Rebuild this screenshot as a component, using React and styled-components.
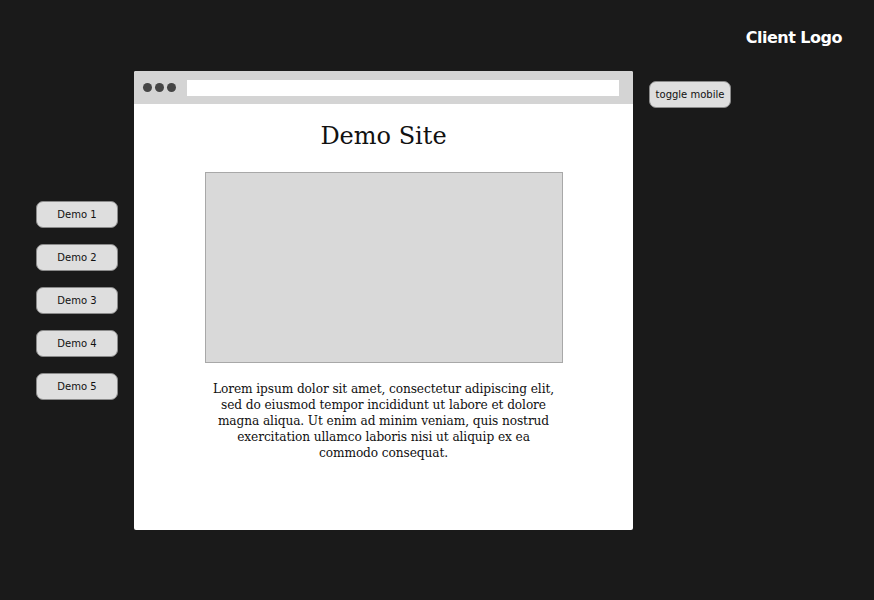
import React from "react";
import styled, { createGlobalStyle } from "styled-components";

const GlobalStyle = createGlobalStyle`
  body {
    margin: 0;
    background: #1a1a1a;
  }
`;

const Page = styled.div`
  width: 874px;
  height: 600px;
  background: #1a1a1a;
  font-family: "DejaVu Sans", "Liberation Sans", sans-serif;
  overflow: hidden;
`;

const Header = styled.div`
  height: 71px;
  display: flex;
  justify-content: flex-end;
  align-items: flex-start;
  padding: 0 32px 0 0;
  box-sizing: border-box;
`;

const Logo = styled.div`
  margin-top: 28px;
  color: #fff;
  font-weight: bold;
  font-size: 16px;
  letter-spacing: -0.5px;
`;

const Main = styled.div`
  display: flex;
  align-items: flex-start;
`;

const Sidebar = styled.div`
  width: 134px;
  box-sizing: border-box;
  padding: 130px 0 0 36px;
  display: flex;
  flex-direction: column;
  gap: 16px;
`;

const PillButton = styled.button`
  width: 82px;
  height: 27px;
  border-radius: 7px;
  border: 1px solid #8a8a8a;
  background: #dedede;
  color: #111;
  font-family: "DejaVu Sans", "Liberation Sans", sans-serif;
  font-size: 10px;
  padding: 0;
  cursor: pointer;
`;

const Browser = styled.div`
  width: 499px;
  height: 459px;
  background: #fff;
  border-radius: 2px;
  display: flex;
  flex-direction: column;
  overflow: hidden;
`;

const TopBar = styled.div`
  height: 33px;
  background: #d4d4d4;
  display: flex;
  align-items: center;
  padding: 0 14px 0 9px;
  gap: 3px;
`;

const Dot = styled.span`
  width: 9px;
  height: 9px;
  border-radius: 50%;
  background: #454545;
`;

const AddressBar = styled.div`
  flex: 1;
  height: 16px;
  background: #fff;
  margin-left: 8px;
`;

const Content = styled.div`
  display: flex;
  flex-direction: column;
  align-items: center;
  font-family: "DejaVu Serif", "Liberation Serif", serif;
  color: #111;
`;

const Title = styled.h1`
  margin: 17px 0 0;
  font-size: 24px;
  font-weight: normal;
  line-height: 30px;
`;

const Placeholder = styled.div`
  margin-top: 21px;
  width: 358px;
  height: 191px;
  box-sizing: border-box;
  background: #d9d9d9;
  border: 1px solid #a8a8a8;
`;

const Paragraph = styled.p`
  margin: 18px 0 0;
  width: 348px;
  text-align: center;
  font-size: 12.2px;
  line-height: 16px;
  letter-spacing: -0.1px;
`;

const RightCol = styled.div`
  padding: 10px 0 0 16px;
`;

const demos = ["Demo 1", "Demo 2", "Demo 3", "Demo 4", "Demo 5"];

export default function App() {
  return (
    <Page>
      <GlobalStyle />
      <Header>
        <Logo>Client Logo</Logo>
      </Header>
      <Main>
        <Sidebar>
          {demos.map((d) => (
            <PillButton key={d}>{d}</PillButton>
          ))}
        </Sidebar>
        <Browser>
          <TopBar>
            <Dot />
            <Dot />
            <Dot />
            <AddressBar />
          </TopBar>
          <Content>
            <Title>Demo Site</Title>
            <Placeholder />
            <Paragraph>
              Lorem ipsum dolor sit amet, consectetur adipiscing elit, sed do
              eiusmod tempor incididunt ut labore et dolore magna aliqua. Ut
              enim ad minim veniam, quis nostrud exercitation ullamco laboris
              nisi ut aliquip ex ea commodo consequat.
            </Paragraph>
          </Content>
        </Browser>
        <RightCol>
          <PillButton>toggle mobile</PillButton>
        </RightCol>
      </Main>
    </Page>
  );
}
